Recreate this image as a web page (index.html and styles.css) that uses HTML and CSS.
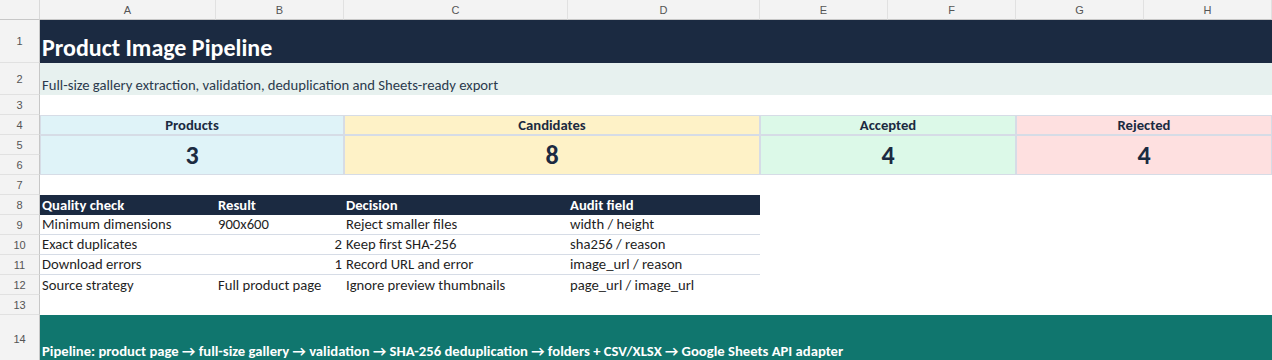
FILE: index.html
```html
<!DOCTYPE html>
<html lang="en">
<head>
<meta charset="utf-8">
<title>Product Image Pipeline</title>
<link rel="stylesheet" href="styles.css">
</head>
<body>
<div class="sheet">
  <div class="corner"></div>
  <div class="colhead">A</div>
  <div class="colhead">B</div>
  <div class="colhead">C</div>
  <div class="colhead">D</div>
  <div class="colhead">E</div>
  <div class="colhead">F</div>
  <div class="colhead">G</div>
  <div class="colhead">H</div>

  <div class="rowhead">1</div>
  <div class="cell title span-all">Product Image Pipeline</div>

  <div class="rowhead">2</div>
  <div class="cell subtitle span-all">Full-size gallery extraction, validation, deduplication and Sheets-ready export</div>

  <div class="rowhead">3</div>
  <div class="cell blank span-all"></div>

  <div class="rowhead">4</div>
  <div class="cell kpi-label kpi-blue span-ab">Products</div>
  <div class="cell kpi-label kpi-yellow span-cd">Candidates</div>
  <div class="cell kpi-label kpi-green span-ef">Accepted</div>
  <div class="cell kpi-label kpi-red span-gh">Rejected</div>

  <div class="rowhead">5</div>
  <div class="cell kpi-value kpi-blue span-ab span-2rows">3</div>
  <div class="cell kpi-value kpi-yellow span-cd span-2rows">8</div>
  <div class="cell kpi-value kpi-green span-ef span-2rows">4</div>
  <div class="cell kpi-value kpi-red span-gh span-2rows">4</div>
  <div class="rowhead">6</div>

  <div class="rowhead">7</div>
  <div class="cell blank span-all"></div>

  <div class="rowhead">8</div>
  <div class="cell th">Quality check</div>
  <div class="cell th">Result</div>
  <div class="cell th">Decision</div>
  <div class="cell th">Audit field</div>
  <div class="cell blank span-eh"></div>

  <div class="rowhead">9</div>
  <div class="cell td">Minimum dimensions</div>
  <div class="cell td">900x600</div>
  <div class="cell td">Reject smaller files</div>
  <div class="cell td">width / height</div>
  <div class="cell blank span-eh"></div>

  <div class="rowhead">10</div>
  <div class="cell td">Exact duplicates</div>
  <div class="cell td num">2</div>
  <div class="cell td">Keep first SHA-256</div>
  <div class="cell td">sha256 / reason</div>
  <div class="cell blank span-eh"></div>

  <div class="rowhead">11</div>
  <div class="cell td">Download errors</div>
  <div class="cell td num">1</div>
  <div class="cell td">Record URL and error</div>
  <div class="cell td">image_url / reason</div>
  <div class="cell blank span-eh"></div>

  <div class="rowhead">12</div>
  <div class="cell td last">Source strategy</div>
  <div class="cell td last">Full product page</div>
  <div class="cell td last">Ignore preview thumbnails</div>
  <div class="cell td last">page_url / image_url</div>
  <div class="cell blank span-eh"></div>

  <div class="rowhead">13</div>
  <div class="cell blank span-all"></div>

  <div class="rowhead">14</div>
  <div class="cell footer span-all">Pipeline: product page → full-size gallery → validation → SHA-256 deduplication → folders + CSV/XLSX → Google Sheets API adapter</div>
</div>
</body>
</html>
```

FILE: styles.css
```css
html, body {
  margin: 0;
  padding: 0;
  background: #ffffff;
  overflow: hidden;
}

.sheet {
  display: grid;
  grid-template-columns: 40px 176px 128px 224px 192px 128px 128px 128px 128px;
  grid-template-rows: 20px 43px 32px 20px 20px 20px 20px 20px 20px 20px 20px 20px 20px 20px 48px;
  width: 1272px;
  font-family: "Carlito", "Calibri", "Lato", sans-serif;
  font-size: 14.67px;
  color: #1f1f1f;
}

.corner {
  background: #f3f3f3;
  border-right: 1px solid #d9d9d9;
  border-bottom: 1px solid #c7c7c7;
  box-sizing: border-box;
}

.colhead {
  background: #f3f3f3;
  border-right: 1px solid #e1e1e1;
  border-bottom: 1px solid #c7c7c7;
  box-sizing: border-box;
  font-family: "Liberation Sans", Arial, sans-serif;
  font-size: 11px;
  color: #555555;
  display: flex;
  align-items: center;
  justify-content: center;
}

.rowhead {
  grid-column: 1;
  background: #f3f3f3;
  border-right: 1px solid #c7c7c7;
  border-bottom: 1px solid #e1e1e1;
  box-sizing: border-box;
  font-family: "Liberation Sans", Arial, sans-serif;
  font-size: 11px;
  color: #555555;
  display: flex;
  align-items: center;
  justify-content: center;
}

.cell {
  box-sizing: border-box;
  padding: 0 2px 1px;
  white-space: nowrap;
  overflow: hidden;
  display: flex;
  align-items: flex-end;
  line-height: 18px;
}

.span-all { grid-column: 2 / 10; }
.span-ab { grid-column: 2 / 4; }
.span-cd { grid-column: 4 / 6; }
.span-ef { grid-column: 6 / 8; }
.span-gh { grid-column: 8 / 10; }
.span-eh { grid-column: 6 / 10; }
.span-2rows { grid-row: span 2; }

.title {
  background: #1b2a41;
  color: #ffffff;
  font-weight: 700;
  font-size: 24px;
  line-height: 28px;
  padding-bottom: 1px;
}

.subtitle {
  background: #e7f1ef;
  color: #2b3a4d;
  padding-bottom: 1px;
}

.blank {
  background: #ffffff;
}

.kpi-label,
.kpi-value {
  justify-content: center;
  color: #1b2a41;
  font-weight: 700;
  border: 1px solid #d6dce6;
}

.kpi-label {
  align-items: center;
  padding-bottom: 0;
}

.kpi-value {
  font-size: 26px;
  line-height: 30px;
  align-items: center;
  padding-bottom: 0;
}

.kpi-blue { background: #dff3f8; }
.kpi-yellow { background: #fef2c7; }
.kpi-green { background: #dcf9e8; }
.kpi-red { background: #fee0e0; }

.th {
  background: #1b2a41;
  color: #ffffff;
  font-weight: 700;
}

.td {
  border-bottom: 1px solid #d6dce6;
  color: #1f1f1f;
}

.td.last {
  border-bottom: none;
}

.td.num {
  justify-content: flex-end;
}

.footer {
  background: #10766e;
  color: #ffffff;
  font-weight: 700;
  padding-bottom: 3px;
}
```
